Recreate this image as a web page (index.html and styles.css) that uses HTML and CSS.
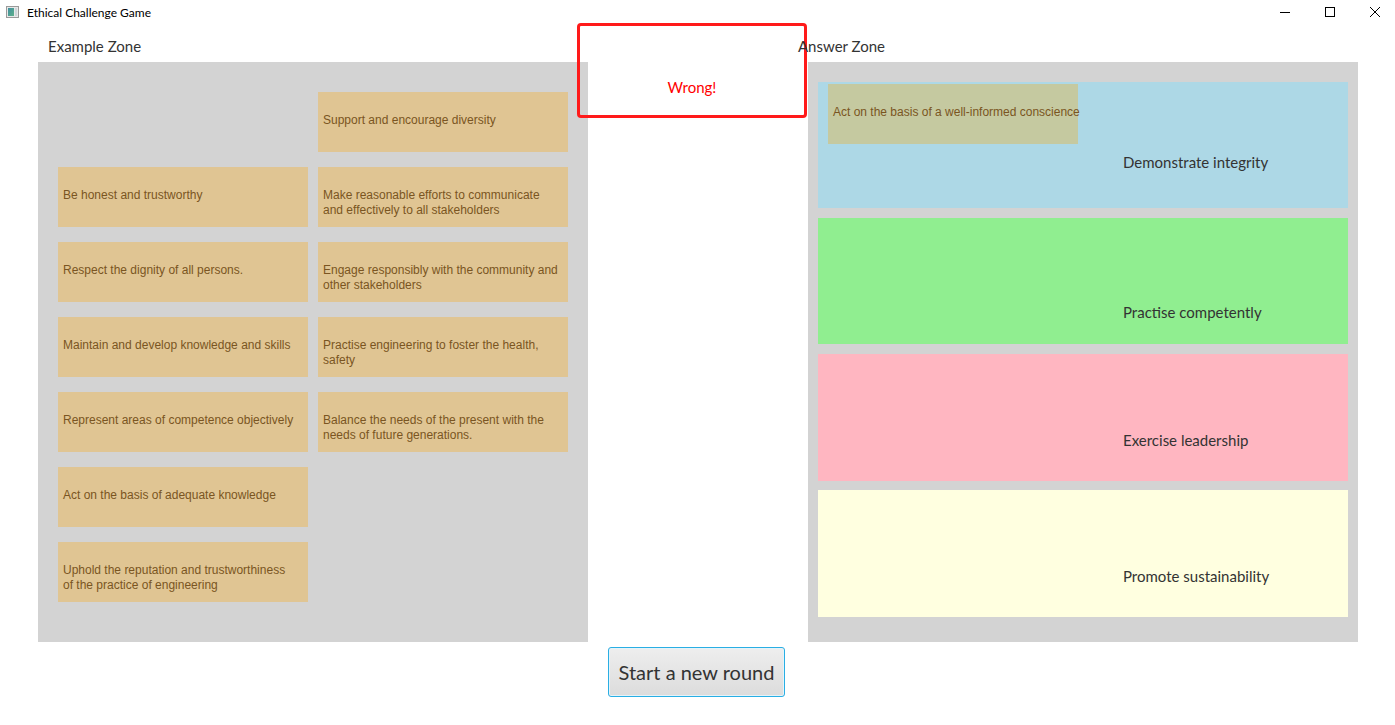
FILE: index.html
```html
<!DOCTYPE html>
<html>
<head>
<meta charset="utf-8">
<title>Ethical Challenge Game</title>
<link rel="stylesheet" href="styles.css">
</head>
<body>
<div class="window">
  <header class="titlebar">
    <div class="title-left">
      <svg class="app-icon" width="13" height="12" viewBox="0 0 13 12">
        <defs>
          <linearGradient id="ig" x1="0" y1="0" x2="1" y2="1">
            <stop offset="0" stop-color="#3f8fa0"/>
            <stop offset="1" stop-color="#5fb08a"/>
          </linearGradient>
        </defs>
        <rect x="0.5" y="0.5" width="12" height="11" fill="#e8e8e8" stroke="#9a9a9a"/>
        <rect x="2" y="2" width="6" height="8" fill="url(#ig)"/>
        <rect x="9" y="2" width="2" height="8" fill="#cfd6da"/>
      </svg>
      <span class="title-text">Ethical Challenge Game</span>
    </div>
    <div class="win-controls">
      <svg width="10" height="10" viewBox="0 0 10 10"><path d="M0 5.5H10" stroke="#000" stroke-width="1"/></svg>
      <svg width="10" height="10" viewBox="0 0 10 10"><rect x="0.5" y="0.5" width="9" height="9" fill="none" stroke="#000"/></svg>
      <svg width="10" height="10" viewBox="0 0 10 10"><path d="M0 0L10 10M10 0L0 10" stroke="#000" stroke-width="1"/></svg>
    </div>
  </header>

  <main class="zones">
    <section class="zone">
      <div class="zone-label zone-label-left">Example Zone</div>
      <div class="example-panel">
        <div class="slot"></div>
        <div class="card">Be honest and trustworthy</div>
        <div class="card">Respect the dignity of all persons.</div>
        <div class="card">Maintain and develop knowledge and skills</div>
        <div class="card">Represent areas of competence objectively</div>
        <div class="card">Act on the basis of adequate knowledge</div>
        <div class="card">Uphold the reputation and trustworthiness of the practice of engineering</div>
        <div class="card">Support and encourage diversity</div>
        <div class="card">Make reasonable efforts to communicate and effectively to all stakeholders</div>
        <div class="card">Engage responsibly with the community and other stakeholders</div>
        <div class="card">Practise engineering to foster the health, safety</div>
        <div class="card">Balance the needs of the present with the needs of future generations.</div>
      </div>
    </section>

    <div class="spacer"></div>

    <section class="zone">
      <div class="zone-label zone-label-right">Answer Zone</div>
      <div class="answer-panel">
        <div class="target target-blue">
          <span class="target-label">Demonstrate integrity</span>
          <div class="card card-dragged">Act on the basis of a well-informed conscience</div>
        </div>
        <div class="target target-green">
          <span class="target-label">Practise competently</span>
        </div>
        <div class="target target-pink">
          <span class="target-label">Exercise leadership</span>
        </div>
        <div class="target target-yellow">
          <span class="target-label">Promote sustainability</span>
        </div>
      </div>
    </section>
  </main>

  <div class="actions">
    <button class="new-round">Start a new round</button>
  </div>

  <div class="feedback">Wrong!</div>
</div>
</body>
</html>
```

FILE: styles.css
```css
html, body {
  margin: 0;
  padding: 0;
  background: #ffffff;
}

body {
  width: 1395px;
  height: 725px;
  overflow: hidden;
  font-family: "Lato", "Liberation Sans", sans-serif;
  color: #333333;
}

.window {
  position: relative;
  width: 1395px;
  height: 725px;
}

/* Title bar */
.titlebar {
  height: 25px;
  display: flex;
  align-items: center;
  justify-content: space-between;
}

.title-left {
  display: flex;
  align-items: center;
  padding-left: 6px;
  gap: 8px;
  margin-top: -1px;
}

.title-text {
  font-size: 12px;
  color: #000;
}

.win-controls {
  display: flex;
  align-items: center;
  gap: 35px;
  padding-right: 15px;
  margin-top: -1px;
}

/* Zones */
.zones {
  display: flex;
  padding-left: 38px;
}

.zone {
  width: 550px;
  display: flex;
  flex-direction: column;
}

.spacer {
  width: 220px;
}

.zone-label {
  height: 37px;
  box-sizing: border-box;
  padding-top: 11px;
  font-size: 15px;
  line-height: 20px;
  color: #333;
}

.zone-label-left {
  margin-left: 10px;
}

.zone-label-right {
  margin-left: -10px;
  position: relative;
  z-index: 2;
}

.example-panel {
  box-sizing: border-box;
  height: 580px;
  background: #d3d3d3;
  padding: 30px 20px;
  display: grid;
  grid-template-columns: 250px 250px;
  grid-template-rows: repeat(7, 60px);
  grid-auto-flow: column;
  column-gap: 10px;
  row-gap: 15px;
}

.card {
  box-sizing: border-box;
  width: 250px;
  height: 60px;
  background: rgba(255, 165, 0, 0.3);
  padding: 21px 10px 0 5px;
  font-family: "Liberation Sans", Arial, sans-serif;
  font-size: 12px;
  line-height: 15px;
  color: #7a5522;
}

.answer-panel {
  box-sizing: border-box;
  height: 580px;
  background: #d3d3d3;
  padding: 20px 10px;
  display: flex;
  flex-direction: column;
  gap: 10px;
}

.target {
  position: relative;
  box-sizing: border-box;
  height: 126px;
  padding-left: 305px;
}

.target-label {
  display: block;
  font-size: 15px;
  line-height: 20px;
  color: #333;
}

.target-blue { background: #add8e6; padding-top: 70px; }
.target-green { background: #90ee90; padding-top: 84px; }
.target-pink { background: #ffb6c1; padding-top: 76px; height: 127px; }
.target-yellow { background: #ffffe0; padding-top: 76px; height: 127px; margin-top: -1px; }

.card-dragged {
  position: absolute;
  left: 10px;
  top: 2px;
  white-space: nowrap;
  overflow: visible;
}

/* Button */
.actions {
  width: 1395px;
  display: flex;
  justify-content: center;
  padding-top: 5px;
}

.new-round {
  width: 177px;
  height: 50px;
  box-sizing: border-box;
  margin-left: -2px;
  border: 1px solid #2aaee3;
  border-radius: 3px;
  box-shadow: inset 0 0 0 1px #e4f3fa;
  background: linear-gradient(#eeeeee, #dcdcdc);
  font-family: "Lato", "Liberation Sans", sans-serif;
  font-size: 20px;
  color: #333;
  padding: 0;
}

/* Feedback overlay */
.feedback {
  position: absolute;
  z-index: 1;
  left: 577px;
  top: 23px;
  width: 230px;
  height: 95px;
  box-sizing: border-box;
  border: 3px solid #ff1a1a;
  border-radius: 4px;
  background: transparent;
  color: #ff0000;
  font-size: 15px;
  line-height: 20px;
  text-align: center;
  padding-top: 51px;
}
```
